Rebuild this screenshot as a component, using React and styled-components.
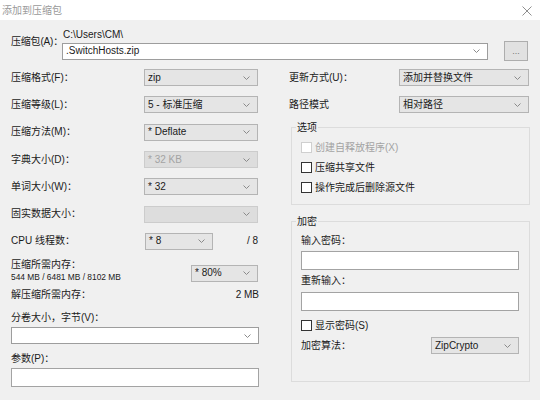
import React from 'react'
import styled, { createGlobalStyle } from 'styled-components'

const GlobalStyle = createGlobalStyle`
  body {
    margin: 0;
    background: #f0f0f0;
    font-family: "Liberation Sans", "Noto Sans CJK SC", sans-serif;
    font-size: 10px;
    color: #1a1a1a;
  }
  * { box-sizing: border-box; }
`

const Window = styled.div`
  width: 540px;
  height: 400px;
  display: flex;
  flex-direction: column;
  background: #f0f0f0;
  overflow: hidden;
`

const TitleBar = styled.div`
  height: 20px;
  flex-shrink: 0;
  background: #fff;
  display: flex;
  align-items: center;
  justify-content: space-between;
  padding: 1px 8px 0 2px;
  color: #9a9a9a;
  line-height: 12px;
`

const Body = styled.div`
  padding: 9px 10px 0 11px;
`

const ArchiveRow = styled.div`
  display: flex;
`

const ArchiveLabel = styled.div`
  width: 51px;
  flex-shrink: 0;
  margin-top: 7px;
  line-height: 12px;
  white-space: nowrap;
  letter-spacing: -0.2px;
`

const PathArea = styled.div`
  flex: 1;
  display: flex;
  flex-direction: column;
`

const PathText = styled.div`
  line-height: 12px;
  padding-left: 1px;
`

const PathRow = styled.div`
  display: flex;
  align-items: center;
  gap: 16px;
  height: 20px;
`

const BrowseButton = styled.div`
  width: 24px;
  height: 20px;
  margin-right: 2px;
  background: #e1e1e1;
  border: 1px solid #adadad;
  color: #777;
  font-size: 9px;
  display: flex;
  align-items: center;
  justify-content: center;
  line-height: 10px;
`

const Columns = styled.div`
  display: grid;
  grid-template-columns: 248px 241px;
  column-gap: 30px;
  margin-top: 3px;
`

const Column = styled.div`
  display: flex;
  flex-direction: column;
`

const FieldRow = styled.div`
  height: 27.3px;
  display: flex;
  align-items: center;
  justify-content: space-between;
  line-height: 12px;
`

const Label = styled.span`
  width: ${p => (p.$w ? `${p.$w}px` : 'auto')};
  color: ${p => (p.$disabled ? '#a0a0a0' : 'inherit')};
  line-height: 12px;
  white-space: nowrap;
`

const Suffix = styled.span`
  margin-left: auto;
  margin-right: 1px;
`

const SelectBox = styled.div`
  width: ${p => (p.$w ? `${p.$w}px` : '100%')};
  flex: ${p => (p.$grow ? 1 : 'none')};
  height: ${p => p.$h || 17}px;
  margin-top: ${p => p.$mt || 0}px;
  margin-right: ${p => p.$mr || 0}px;
  display: flex;
  align-items: center;
  justify-content: space-between;
  padding: 0 7px 0 3px;
  border: 1px solid ${p => (p.$edit ? '#9d9d9d' : p.$disabled ? '#cccccc' : '#b4b4b4')};
  background: ${p => (p.$edit ? '#fff' : p.$disabled ? '#dddddd' : '#e5e5e5')};
  color: ${p => (p.$disabled ? '#a3a3a3' : '#1a1a1a')};
  line-height: 12px;
  white-space: nowrap;
`

const TextInput = styled.div`
  height: ${p => p.$h || 19}px;
  margin-top: ${p => p.$mt || 0}px;
  background: #fff;
  border: 1px solid #a3a3a3;
`

const MemRow = styled.div`
  display: flex;
  align-items: center;
  justify-content: space-between;
  margin-top: 4px;
`

const MemText = styled.div`
  display: flex;
  flex-direction: column;
  line-height: 12px;
`

const MemSmall = styled.span`
  font-size: 8.4px;
  line-height: 12px;
`

const PlainRow = styled.div`
  display: flex;
  justify-content: space-between;
  line-height: 12px;
  margin-top: ${p => p.$mt || 0}px;
`

const Group = styled.fieldset`
  margin: ${p => p.$mt || 0}px 0 0 2px;
  padding: 0 10px ${p => p.$pb || 0}px 9px;
  border: 1px solid #dcdcdc;
  min-width: 0;
`

const Legend = styled.legend`
  margin-left: -5px;
  padding: 0 1px;
  line-height: 12px;
`

const GroupContent = styled.div`
  display: flex;
  flex-direction: column;
  margin-top: ${p => p.$mt || 0}px;
`

const CheckRow = styled.div`
  height: 20px;
  display: flex;
  align-items: center;
  gap: 3px;
  line-height: 12px;
  margin-top: ${p => p.$mt || 0}px;
  color: ${p => (p.$disabled ? '#a3a3a3' : 'inherit')};
`

const Box = styled.span`
  width: 11px;
  height: 11px;
  background: #fff;
  border: 1px solid ${p => (p.$disabled ? '#cfcfcf' : '#333')};
`

const Chevron = () => (
  <svg width="7" height="4" viewBox="0 0 7 4">
    <polyline points="0.5,0.5 3.5,3.5 6.5,0.5" fill="none" stroke="#8a8a8a" strokeWidth="1" />
  </svg>
)

const Select = ({ value, ...rest }) => (
  <SelectBox {...rest}>
    <span>{value}</span>
    <Chevron />
  </SelectBox>
)

const Check = ({ label, disabled, mt }) => (
  <CheckRow $disabled={disabled} $mt={mt}>
    <Box $disabled={disabled} />
    <span>{label}</span>
  </CheckRow>
)

const leftRows = [
  { label: '压缩格式(F)：', value: 'zip' },
  { label: '压缩等级(L)：', value: '5 - 标准压缩' },
  { label: '压缩方法(M)：', value: '* Deflate' },
  { label: '字典大小(D)：', value: '* 32 KB', disabled: true },
  { label: '单词大小(W)：', value: '* 32' },
  { label: '固实数据大小：', value: '', disabled: true },
]

export default function App() {
  return (
    <Window>
      <GlobalStyle />
      <TitleBar>
        <span>添加到压缩包</span>
        <svg width="10" height="10" viewBox="0 0 10 10">
          <path d="M0.5 0.5 L9.5 9.5 M9.5 0.5 L0.5 9.5" stroke="#8f8f8f" strokeWidth="1" />
        </svg>
      </TitleBar>
      <Body>
        <ArchiveRow>
          <ArchiveLabel>压缩包(A)：</ArchiveLabel>
          <PathArea>
            <PathText>C:\Users\CM\</PathText>
            <PathRow>
              <Select $grow $edit value=".SwitchHosts.zip" />
              <BrowseButton>...</BrowseButton>
            </PathRow>
          </PathArea>
        </ArchiveRow>

        <Columns>
          <Column>
            {leftRows.map(r => (
              <FieldRow key={r.label}>
                <Label>{r.label}</Label>
                <Select $w={114} $mr={1} value={r.value} $disabled={r.disabled} />
              </FieldRow>
            ))}
            <FieldRow>
              <Label $w={134}>CPU 线程数：</Label>
              <Select $w={68} value="* 8" />
              <Suffix>/ 8</Suffix>
            </FieldRow>
            <MemRow>
              <MemText>
                <span>压缩所需内存：</span>
                <MemSmall>544 MB / 6481 MB / 8102 MB</MemSmall>
              </MemText>
              <Select $w={67} $mt={4} $mr={1} value="* 80%" />
            </MemRow>
            <PlainRow $mt={6}>
              <span>解压缩所需内存：</span>
              <span>2 MB</span>
            </PlainRow>
            <PlainRow $mt={11}>
              <span>分卷大小，字节(V)：</span>
            </PlainRow>
            <Select $edit $mt={3} $mr={-1} value="" />
            <PlainRow $mt={9}>
              <span>参数(P)：</span>
            </PlainRow>
            <TextInput $mt={3} />
          </Column>

          <Column>
            <FieldRow>
              <Label>更新方式(U)：</Label>
              <Select $w={130} $mr={1} value="添加并替换文件" />
            </FieldRow>
            <FieldRow>
              <Label>路径模式</Label>
              <Select $w={130} $mr={1} value="相对路径" />
            </FieldRow>

            <Group $mt={3} $pb={6}>
              <Legend>选项</Legend>
              <GroupContent $mt={4}>
                <Check disabled label="创建自释放程序(X)" />
                <Check label="压缩共享文件" />
                <Check label="操作完成后删除源文件" />
              </GroupContent>
            </Group>

            <Group $mt={11} $pb={25}>
              <Legend>加密</Legend>
              <GroupContent $mt={7}>
                <Label>输入密码：</Label>
                <TextInput $mt={4} />
                <Label style={{ marginTop: 5 }}>重新输入：</Label>
                <TextInput $mt={5} />
                <Check mt={5} label="显示密码(S)" />
                <FieldRow style={{ height: 20 }}>
                  <Label>加密算法：</Label>
                  <Select $w={88} value="ZipCrypto" />
                </FieldRow>
              </GroupContent>
            </Group>
          </Column>
        </Columns>
      </Body>
    </Window>
  )
}
